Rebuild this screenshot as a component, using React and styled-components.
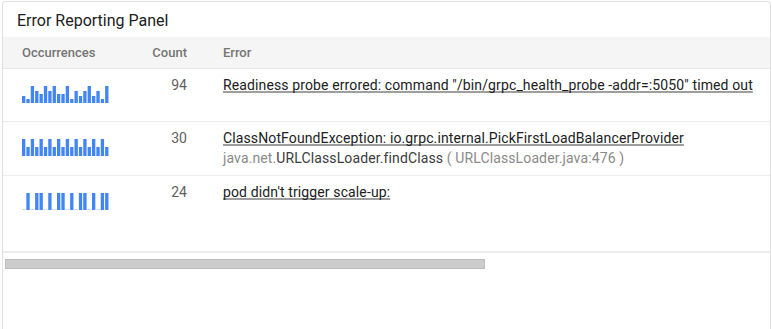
import React from "react";
import styled, { createGlobalStyle } from "styled-components";

const GlobalStyle = createGlobalStyle`
  html, body {
    margin: 0;
    padding: 0;
    overflow: hidden;
    background: #ffffff;
  }
  body {
    font-family: Roboto, "Liberation Sans", Arial, sans-serif;
  }
`;

const Panel = styled.div`
  box-sizing: border-box;
  margin: 1px 0 0 2px;
  width: 769px;
  height: 328px;
  border: 1px solid #e0e0e0;
  border-bottom: none;
  border-radius: 4px 4px 0 0;
  background: #ffffff;
  overflow: hidden;
`;

const Title = styled.div`
  padding: 9px 14px 6px;
  font-size: 16px;
  line-height: 20px;
  color: #212121;
`;

const TableArea = styled.div`
  height: 214px;
  border-bottom: 2px solid #ececec;
  overflow: hidden;
`;

const Grid = styled.div`
  display: grid;
  grid-template-columns: 130px 54px 1fr;
`;

const HeaderRow = styled(Grid)`
  height: 32px;
  box-sizing: border-box;
  background: #f5f5f5;
  border-bottom: 1px solid #e6e6e6;
  align-items: center;
  font-size: 13px;
  font-weight: 500;
  color: #757575;
`;

const HeadCell = styled.div`
  padding-left: ${(p) => p.$pl || 0}px;
  text-align: ${(p) => (p.$right ? "right" : "left")};
`;

const Row = styled(Grid)`
  box-sizing: border-box;
  padding: 6px 0 7px;
  min-height: 53px;
  border-bottom: 1px solid #ededed;
  align-items: start;
  &:last-child {
    border-bottom: none;
  }
`;

const SparkCell = styled.div`
  padding-left: 19px;
  padding-top: 11px;
  line-height: 0;
`;

const CountCell = styled.div`
  text-align: right;
  font-size: 14px;
  line-height: 20px;
  color: #5f5f5f;
`;

const ErrorCell = styled.div`
  padding-left: 36px;
  font-size: 14px;
  line-height: 20px;
  letter-spacing: 0.12px;
  color: #212121;
  white-space: nowrap;
`;

const ErrorLink = styled.span`
  text-decoration: underline;
  text-decoration-color: #9e9e9e;
  text-decoration-thickness: 2px;
  text-underline-offset: 1px;
  text-decoration-skip-ink: none;
`;

const Trace = styled.div`
  color: #8a8a8a;
`;

const TraceStrong = styled.span`
  color: #3c3c3c;
`;

const Scrollbar = styled.div`
  box-sizing: border-box;
  margin: 6px 0 0 2px;
  width: 480px;
  height: 10px;
  background: #cdcdcd;
  border: 1px solid #bdbdbd;
`;

const MAX = 17;

function Sparkline({ values }) {
  const w = 87.5;
  const n = values.length;
  const step = w / n;
  const bw = step - 1.05;
  return (
    <svg width="88" height={MAX} viewBox={`0 0 88 ${MAX}`}>
      {values.map((v, i) => {
        const h = v === 0 ? 1 : v;
        return (
          <rect
            key={i}
            x={i * step}
            y={MAX - h}
            width={bw}
            height={h}
            fill="#4285f4"
            opacity={v === 0 ? 0.3 : 1}
          />
        );
      })}
    </svg>
  );
}

const rows = [
  {
    count: 94,
    spark: [7, 4, 17, 12, 9, 17, 12, 17, 9, 9, 17, 4, 12, 7, 12, 17, 7, 12, 4, 17],
    error: 'Readiness probe errored: command "/bin/grpc_health_probe -addr=:5050" timed out',
  },
  {
    count: 30,
    spark: Array.from({ length: 20 }, (_, i) => (i % 2 === 0 ? 17 : 9)),
    error: "ClassNotFoundException: io.grpc.internal.PickFirstLoadBalancerProvider",
    trace: true,
  },
  {
    count: 24,
    spark: [0, 1, 0, 1, 1, 0, 1, 0, 1, 1, 0, 1, 0, 1, 1, 0, 1, 0, 1, 1].map((v) => (v ? 17 : 0)),
    error: "pod didn't trigger scale-up:",
  },
];

export default function App() {
  return (
    <>
      <GlobalStyle />
      <Panel>
        <Title>Error Reporting Panel</Title>
        <TableArea>
          <HeaderRow>
            <HeadCell $pl={19}>Occurrences</HeadCell>
            <HeadCell $right>Count</HeadCell>
            <HeadCell $pl={36}>Error</HeadCell>
          </HeaderRow>
          {rows.map((r) => (
            <Row key={r.count}>
              <SparkCell>
                <Sparkline values={r.spark} />
              </SparkCell>
              <CountCell>{r.count}</CountCell>
              <ErrorCell>
                <ErrorLink>{r.error}</ErrorLink>
                {r.trace && (
                  <Trace>
                    java.net.<TraceStrong>URLClassLoader.findClass</TraceStrong> ( URLClassLoader.java:476 )
                  </Trace>
                )}
              </ErrorCell>
            </Row>
          ))}
        </TableArea>
        <Scrollbar />
      </Panel>
    </>
  );
}
